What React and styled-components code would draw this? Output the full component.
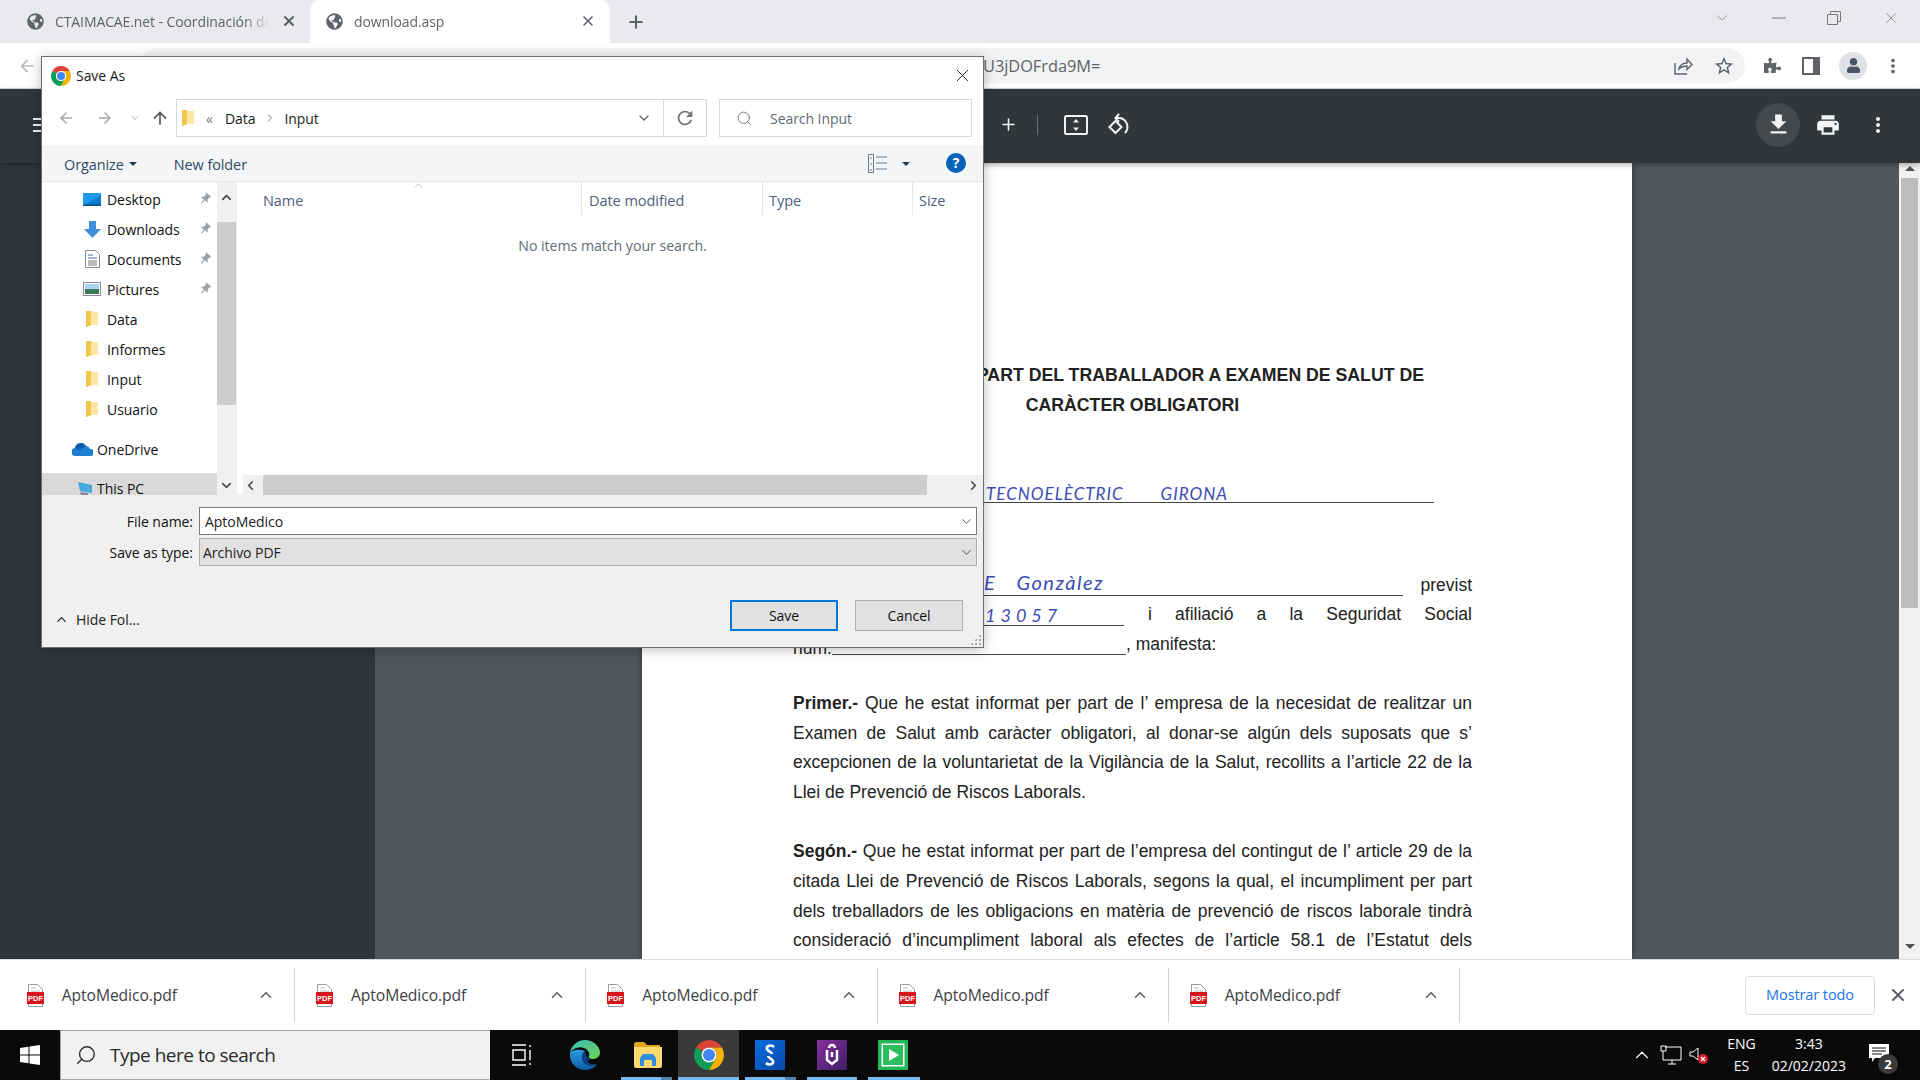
import React from "react";
import styled, { createGlobalStyle } from "styled-components";
import { FaGlobeAmericas, FaPuzzlePiece, FaUser } from "react-icons/fa";
import { FiChevronUp, FiChevronDown, FiChevronLeft, FiChevronRight, FiSearch, FiX, FiPlus } from "react-icons/fi";
import { MdMoreVert, MdFileDownload, MdPrint, MdArrowBack, MdArrowForward, MdArrowUpward, MdRefresh, MdPushPin, MdStarBorder } from "react-icons/md";

const UI = `"Open Sans", "Noto Sans", sans-serif`;
const DOC = `"Liberation Sans", Arial, sans-serif`;

const Global = createGlobalStyle`
  html, body { margin: 0; padding: 0; width: 1920px; height: 1080px; overflow: hidden; }
  * { box-sizing: border-box; }
  body { font-family: ${UI}; }
`;

const Screen = styled.div`
  position: relative;
  width: 1920px;
  height: 1080px;
  display: flex;
  flex-direction: column;
  overflow: hidden;
`;

/* browser chrome */
const TabStrip = styled.div`
  height: 43px;
  flex: none;
  background: #e8eaed;
  display: flex;
  align-items: center;
  padding-left: 20px;
  color: #5f6368;
`;
const Tab = styled.div`
  height: ${(p) => (p.$active ? "43px" : "auto")};
  width: ${(p) => (p.$active ? "300px" : "280px")};
  margin-left: ${(p) => (p.$active ? "10px" : "0")};
  background: ${(p) => (p.$active ? "#fff" : "transparent")};
  border-radius: 10px 10px 0 0;
  display: flex;
  align-items: center;
  padding: ${(p) => (p.$active ? "0 14px 1px 16px" : "0 3px 1px 7px")};
  font-size: 14px;
  gap: 11px;
`;
const TabTitle = styled.span`
  flex: 1;
  white-space: nowrap;
  overflow: hidden;
  letter-spacing: -0.1px;
  -webkit-mask-image: linear-gradient(90deg, #000 88%, transparent 100%);
`;
const NewTab = styled.div`
  margin-left: 16px;
  display: flex;
  color: #5f6368;
`;
const WindowControls = styled.div`
  margin-left: auto;
  display: flex;
  align-items: center;
  gap: 41px;
  padding: 0 20px 7px 0;
  color: #77797c;
`;
const Toolbar = styled.div`
  height: 46px;
  flex: none;
  background: #fff;
  border-bottom: 1px solid #dadce0;
  display: flex;
  align-items: flex-start;
  padding: 5px 0 0 17px;
  color: #5f6368;
`;
const BackIcon = styled.div`
  width: 123px;
  display: flex;
  height: 35px;
  align-items: center;
  color: #b9bbbe;
`;
const Omnibox = styled.div`
  width: 1605px;
  height: 35px;
  background: #f1f3f4;
  border-radius: 18px;
  display: flex;
  align-items: center;
  padding: 0 10px 0 843px;
  font-size: 16.4px;
  color: #5f6368;
  letter-spacing: -0.05px;
`;
const OmniActions = styled.div`
  margin-left: auto;
  display: flex;
  align-items: center;
  gap: 20px;
`;
const ToolbarActions = styled.div`
  display: flex;
  height: 35px;
  align-items: center;
  gap: 21px;
  padding-left: 19px;
`;
const Avatar = styled.div`
  width: 28px;
  height: 28px;
  margin-left: -2px;
  border-radius: 50%;
  background: #dfe1e5;
  display: flex;
  align-items: center;
  justify-content: center;
  color: #4a5568;
`;
const MenuDots = styled(MdMoreVert)`
  margin-left: -6px;
`;

/* pdf viewer */
const PdfBar = styled.div`
  height: 74px;
  flex: none;
  background: #323639;
  display: flex;
  align-items: center;
  color: #f1f3f4;
  padding: 0 0 3px 33px;
  position: relative;
  z-index: 1;
  box-shadow: 0 2px 5px rgba(0, 0, 0, 0.3);
`;
const Burger = styled.div`
  width: 18px;
  height: 14px;
  border-top: 2px solid #f1f3f4;
  border-bottom: 2px solid #f1f3f4;
  position: relative;
  &::after {
    content: "";
    position: absolute;
    left: 0;
    right: 0;
    top: 4px;
    height: 2px;
    background: #f1f3f4;
  }
`;
const ZoomTools = styled.div`
  margin-left: 948px;
  display: flex;
  align-items: center;
  gap: 19px;
`;
const BarDivider = styled.div`
  width: 1px;
  height: 20px;
  background: #6b6f72;
`;
const FitIcon = styled.svg`
  margin-left: 7px;
`;
const PdfActions = styled.div`
  margin-left: auto;
  display: flex;
  align-items: center;
  padding-right: 20px;
  gap: 14px;
`;
const RoundButton = styled.div`
  width: 44px;
  height: 44px;
  border-radius: 50%;
  background: ${(p) => (p.$on ? "#46494c" : "transparent")};
  display: flex;
  align-items: center;
  justify-content: center;
  margin-left: ${(p) => (p.$tight ? "-8px" : "0")};
`;
const Viewer = styled.div`
  flex: 1;
  min-height: 0;
  display: flex;
  background: #525659;
`;
const SidePanel = styled.div`
  width: 375px;
  background: #323639;
  flex: none;
`;
const PageArea = styled.div`
  flex: 1;
  display: flex;
  padding-left: 267px;
  overflow: hidden;
`;
const Page = styled.div`
  width: 990px;
  height: 796px;
  background: #fff;
  padding: 197px 160px 0 151px;
  font-family: ${DOC};
  color: #222;
  overflow: hidden;
  box-shadow: 0 0 6px rgba(0, 0, 0, 0.45);
`;
const DocTitle = styled.div`
  font-weight: 700;
  font-size: 17.7px;
  line-height: 30px;
  text-align: ${(p) => (p.$end ? "right" : "center")};
  padding-right: ${(p) => (p.$end ? "48px" : "0")};
  white-space: nowrap;
`;
const DocRow = styled.div`
  display: flex;
  align-items: flex-end;
  height: 29.5px;
  font-size: 17.5px;
  white-space: nowrap;
  margin-top: ${(p) => p.$top || 0}px;
  width: ${(p) => p.$width || "100%"};
`;
const Blank = styled.span`
  flex: ${(p) => (p.$w ? "none" : 1)};
  width: ${(p) => p.$w || 0}px;
  border-bottom: 1.5px solid #444;
  height: 24px;
  padding-left: ${(p) => p.$pad || 0}px;
  margin-bottom: 4px;
`;
const Handwriting = styled.span`
  display: inline-block;
  font-family: Lato, "Open Sans", sans-serif;
  font-style: italic;
  color: #3c4cb4;
  font-size: ${(p) => p.$size || 17}px;
  letter-spacing: ${(p) => p.$space || 0}px;
  word-spacing: ${(p) => p.$words || 0}px;
  transform: translateY(${(p) => p.$y || 0}px);
`;
const RowText = styled.span`
  flex: ${(p) => (p.$fill ? 1 : "none")};
  margin-left: ${(p) => p.$left || 0}px;
  text-align: justify;
  text-align-last: ${(p) => (p.$fill ? "justify" : "auto")};
  line-height: 29.5px;
`;
const Paragraph = styled.div`
  margin-top: ${(p) => p.$top}px;
  font-size: 17.5px;
  line-height: 29.6px;
`;
const Line = styled.div`
  text-align: justify;
  text-align-last: ${(p) => (p.$last ? "left" : "justify")};
  white-space: nowrap;
`;
const VScroll = styled.div`
  width: 21px;
  flex: none;
  background: #f1f1f1;
  display: flex;
  flex-direction: column;
  align-items: center;
  padding-top: 3px;
  color: #505050;
`;
const Triangle = styled.div`
  width: 0;
  height: 0;
  border-left: 5px solid transparent;
  border-right: 5px solid transparent;
  ${(p) => (p.$down ? "border-top: 5px solid #505050;" : "border-bottom: 5px solid #505050;")}
  margin: ${(p) => p.$m || "0"};
`;
const VThumb = styled.div`
  width: 17px;
  height: 430px;
  background: #bdbdbd;
  margin-top: 7px;
`;

/* download shelf */
const Shelf = styled.div`
  height: 71px;
  flex: none;
  background: #fff;
  border-top: 1px solid #dadce0;
  display: flex;
  align-items: center;
  padding-left: 3.75px;
  color: #3c4043;
`;
const DownloadItem = styled.div`
  width: 291.25px;
  height: 55px;
  border-right: 1px solid #d0d2d5;
  display: flex;
  align-items: center;
  padding: 0 19px 0 ${(p) => (p.$first ? 23 : 21)}px;
  font-size: 15.7px;
  gap: 18px;
`;
const ItemName = styled.span`
  flex: 1;
  letter-spacing: -0.1px;
`;
const ShowAll = styled.div`
  margin-left: auto;
  width: 130px;
  height: 39px;
  border: 1px solid #dadce0;
  border-radius: 4px;
  color: #1a73e8;
  display: flex;
  align-items: center;
  justify-content: center;
  font-size: 14.5px;
  font-weight: 500;
  letter-spacing: -0.1px;
  padding-bottom: 2px;
`;
const ShelfClose = styled.div`
  width: 45px;
  display: flex;
  justify-content: center;
  color: #5f6368;
`;

/* taskbar */
const Taskbar = styled.div`
  height: 50px;
  flex: none;
  background: #0a0a0b;
  display: flex;
  align-items: stretch;
  color: #fff;
`;
const StartButton = styled.div`
  width: 60px;
  display: flex;
  align-items: center;
  justify-content: center;
`;
const SearchBox = styled.div`
  width: 430px;
  background: #f1f1f1;
  border: 1px solid #a8a8a8;
  border-right: 0;
  display: flex;
  align-items: center;
  padding-left: 14px;
  gap: 13px;
  font-size: 19px;
  color: #2b2b2b;
  letter-spacing: -0.5px;
`;
const SearchGlass = styled(FiSearch)`
  transform: scaleX(-1);
`;
const TaskCell = styled.div`
  position: relative;
  width: ${(p) => p.$w}px;
  display: flex;
  align-items: center;
  justify-content: center;
  background: ${(p) => (p.$active ? "#3a3a3a" : "transparent")};
  &::after {
    content: "";
    display: ${(p) => (p.$run ? "block" : "none")};
    position: absolute;
    left: ${(p) => (p.$run ? p.$run[0] : 0)}px;
    right: ${(p) => (p.$run ? p.$run[1] : 0)}px;
    bottom: 0;
    height: 3px;
    background: ${(p) => (p.$split ? "linear-gradient(90deg, #76b9ed 78%, #4f85ad 78%)" : "#76b9ed")};
  }
`;
const Tray = styled.div`
  margin-left: auto;
  display: flex;
  align-items: center;
  padding-right: 31px;
`;
const TrayIcons = styled.div`
  display: flex;
  align-items: center;
  gap: 7px;
  margin-right: 18px;
`;
const TrayText = styled.div`
  display: flex;
  flex-direction: column;
  align-items: center;
  gap: 4px;
  font-size: 14px;
  line-height: 18px;
  margin-right: ${(p) => p.$right}px;
`;
const Notify = styled.div`
  position: relative;
  width: 20px;
  height: 18px;
  margin-top: -4px;
`;
const NotifyBadge = styled.span`
  position: absolute;
  right: -9px;
  bottom: -12px;
  width: 20px;
  height: 20px;
  border-radius: 50%;
  background: #3a3a3a;
  font-size: 13px;
  font-weight: 700;
  line-height: 20px;
  text-align: center;
`;

/* save as dialog */
const Dialog = styled.div`
  position: absolute;
  left: 41px;
  top: 56px;
  width: 943px;
  height: 592px;
  background: #fff;
  border: 1px solid #6e6e6e;
  display: flex;
  flex-direction: column;
  box-shadow: 0 2px 12px rgba(0, 0, 0, 0.25);
  font-size: 14px;
  color: #1a1a1a;
  z-index: 5;
  letter-spacing: -0.05px;
`;
const TitleBar = styled.div`
  height: 42px;
  flex: none;
  display: flex;
  align-items: center;
  padding: 0 10px 5px 9px;
  gap: 5px;
`;
const CloseX = styled.div`
  margin-left: auto;
  display: flex;
`;
const NavBar = styled.div`
  height: 46px;
  flex: none;
  display: flex;
  align-items: flex-start;
  padding-left: 15px;
  color: #a8a8a8;
`;
const NavButtons = styled.div`
  width: 119px;
  height: 38px;
  display: flex;
  align-items: center;
  gap: 21px;
`;
const SmallChevron = styled(FiChevronDown)`
  margin-left: -6px;
`;
const UpArrow = styled(MdArrowUpward)`
  margin-left: -12px;
`;
const AddressBox = styled.div`
  width: 531px;
  height: 38px;
  border: 1px solid #d9d9d9;
  display: flex;
  align-items: center;
  color: #1a1a1a;
  padding-left: 4px;
`;
const Crumb = styled.span`
  margin-left: ${(p) => (p.$auto ? "auto" : `${p.$left || 0}px`)};
  margin-right: ${(p) => (p.$auto ? "11px" : "0")};
  color: ${(p) => p.$color || "inherit"};
  display: flex;
`;
const AddressEnd = styled.div`
  height: 100%;
  width: 43px;
  border-left: 1px solid #d9d9d9;
  display: flex;
  align-items: center;
  justify-content: center;
  color: #777;
`;
const SearchField = styled.div`
  margin-left: 12px;
  width: 253px;
  height: 38px;
  border: 1px solid #d9d9d9;
  display: flex;
  align-items: center;
  padding-left: 16px;
  gap: 17px;
  color: #5f6b76;
`;
const CommandBar = styled.div`
  height: 37px;
  flex: none;
  background: #f4f5f7;
  border-bottom: 1px solid #e6e6e6;
  display: flex;
  align-items: center;
  padding: 2px 17px 0 22px;
  color: #2f4a66;
  font-size: 14.4px;
`;
const DropCaret = styled.span`
  display: inline-block;
  width: 0;
  height: 0;
  border-left: 4px solid transparent;
  border-right: 4px solid transparent;
  border-top: 4px solid #1f3a5c;
  margin-left: ${(p) => p.$left}px;
`;
const NewFolder = styled.span`
  margin-left: 37px;
`;
const CommandRight = styled.div`
  margin-left: auto;
  display: flex;
  align-items: center;
`;
const HelpDot = styled.div`
  width: 20px;
  height: 20px;
  border-radius: 50%;
  background: #0a62b8;
  color: #fff;
  font-size: 14px;
  font-weight: 700;
  line-height: 20px;
  text-align: center;
  margin: -2px 0 0 36px;
`;
const Browser = styled.div`
  height: 313px;
  flex: none;
  display: flex;
`;
const NavPane = styled.div`
  width: 175px;
  flex: none;
  padding-top: 2px;
  overflow: hidden;
`;
const TreeRow = styled.div`
  height: 30px;
  display: flex;
  align-items: center;
  padding-left: ${(p) => p.$indent}px;
  margin-top: ${(p) => p.$top || 0}px;
  background: ${(p) => (p.$selected ? "#d9d9d9" : "transparent")};
  color: #111;
  position: relative;
`;
const TreeIcon = styled.span`
  width: ${(p) => p.$w}px;
  display: flex;
  justify-content: center;
  flex: none;
  margin-right: ${(p) => p.$gap}px;
`;
const Pin = styled.span`
  margin-left: auto;
  margin-right: 5px;
  display: flex;
  color: #9aa2a8;
`;
const PinIcon = styled(MdPushPin)`
  transform: rotate(40deg);
`;
const PaneScroll = styled.div`
  width: 19px;
  flex: none;
  background: #f0f0f0;
  display: flex;
  flex-direction: column;
  align-items: center;
  color: #444;
  padding-top: 8px;
`;
const PaneThumb = styled.div`
  width: 19px;
  height: 183px;
  background: #cdcdcd;
  margin-top: 17px;
`;
const PaneDown = styled.div`
  margin-top: 73px;
  display: flex;
`;
const Files = styled.div`
  flex: 1;
  display: flex;
  flex-direction: column;
  border-left: 1px solid #f0f0f0;
`;
const HeaderRow = styled.div`
  height: 33px;
  display: flex;
  flex: none;
  color: #4c607a;
  font-size: 14.5px;
`;
const HeaderCell = styled.div`
  position: relative;
  width: ${(p) => p.$w}px;
  padding: 3px 0 0 ${(p) => p.$pad}px;
  display: flex;
  align-items: center;
  border-right: ${(p) => (p.$end ? "0" : "1px solid #e5e5e5")};
`;
const SortCaret = styled.span`
  position: absolute;
  left: 175px;
  top: -3px;
  display: flex;
  color: #8a8a8a;
`;
const EmptyNote = styled.div`
  flex: 1;
  text-align: center;
  padding: 21px 0 0 5px;
  font-size: 14.2px;
  color: #5f6b76;
`;
const HScroll = styled.div`
  height: 20px;
  flex: none;
  background: #f0f0f0;
  display: flex;
  align-items: center;
  margin-left: 6px;
  color: #444;
`;
const HThumb = styled.div`
  width: 664px;
  height: 20px;
  background: #cdcdcd;
`;
const ArrowCell = styled.div`
  width: ${(p) => p.$w}px;
  display: flex;
  justify-content: ${(p) => (p.$end ? "center" : "flex-start")};
  margin-left: ${(p) => (p.$end ? "auto" : "0")};
`;
const Footer = styled.div`
  flex: 1;
  background: #f0f0f0;
  padding-top: 12px;
  position: relative;
  display: flex;
  flex-direction: column;
`;
const FieldRow = styled.div`
  display: grid;
  grid-template-columns: 151px 778px;
  column-gap: 6px;
  align-items: center;
  margin-bottom: 3px;
`;
const FieldLabel = styled.label`
  text-align: right;
  color: #111;
`;
const FieldBox = styled.div`
  height: 28px;
  border: 1px solid ${(p) => (p.$gray ? "#adadad" : "#7a7a7a")};
  background: ${(p) => (p.$gray ? "#e1e1e1" : "#fff")};
  display: flex;
  align-items: center;
  padding: 0 2px 0 ${(p) => (p.$gray ? 3 : 5)}px;
  justify-content: space-between;
  color: #222;
`;
const ButtonRow = styled.div`
  margin-top: 31px;
  display: flex;
  align-items: center;
  padding: 0 20px 0 12px;
`;
const HideFolders = styled.div`
  display: flex;
  align-items: center;
  gap: 7px;
  margin-top: 8px;
  color: #222;
`;
const DialogButton = styled.div`
  width: 108px;
  height: 31px;
  border: ${(p) => (p.$primary ? "2px solid #0078d7" : "1px solid #adadad")};
  background: #e1e1e1;
  display: flex;
  align-items: center;
  justify-content: center;
  color: #111;
  margin-left: ${(p) => p.$left || "17px"};
`;
const Grip = styled.div`
  position: absolute;
  right: 2px;
  bottom: 2px;
  width: 11px;
  height: 11px;
  background-image: radial-gradient(circle, #a8a8a8 1.1px, transparent 1.2px);
  background-size: 4px 4px;
  clip-path: polygon(100% 0, 100% 100%, 0 100%);
`;

const ChromeLogo = ({ size }) => (
  <svg width={size} height={size} viewBox="4 4 40 40">
    <path fill="#db4437" d="M6.68 14A20 20 0 0 1 41.32 14H24A10 10 0 0 0 15.34 19z" />
    <path fill="#0f9d58" d="M6.68 14L15.34 19A10 10 0 0 0 32.66 29L24 44A20 20 0 0 1 6.68 14z" />
    <path fill="#f4b400" d="M24 14H41.32A20 20 0 0 1 24 44L32.66 29A10 10 0 0 0 24 14z" />
    <circle cx="24" cy="24" r="10" fill="#fff" />
    <circle cx="24" cy="24" r="8" fill="#4285f4" />
  </svg>
);
const Folder = () => (
  <svg width="14" height="18" viewBox="0 0 14 18">
    <path fill="#f7d774" d="M1 1h5l1 1v13l-6 2z" />
    <path fill="#fbe6a2" d="M6 2h7v13H3z" />
    <path fill="#f0c64e" d="M1 1v16l5-2V1z" />
  </svg>
);
const PdfIcon = () => (
  <svg width="17" height="23" viewBox="0 0 17 23">
    <path fill="#fff" stroke="#9a9a9a" d="M1.5.5h9l5 5v17h-14z" />
    <path stroke="#bbb" d="M4 4h5M4 7h9" />
    <rect x="0" y="8" width="17" height="12" fill="#d8131b" />
    <text x="8.5" y="17" fontSize="7.5" fontWeight="700" fill="#fff" textAnchor="middle" fontFamily={DOC}>
      PDF
    </text>
  </svg>
);
const WindowsLogo = () => (
  <svg width="20" height="20" viewBox="0 0 20 20" fill="#fff">
    <path d="M0 3l8.500-1.200V9.500H0zM9.500 1.600L20 0v9.500H9.500zM0 10.500h8.500v7.700L0 17zM9.500 10.500H20V20l-10.500-1.600z" />
  </svg>
);
const EdgeLogo = () => (
  <svg width="30" height="30" viewBox="0 0 30 30">
    <defs>
      <linearGradient id="edgeA" x1="0" y1="0" x2="1" y2="1">
        <stop offset="0" stopColor="#35c1c0" />
        <stop offset="1" stopColor="#6fd24c" />
      </linearGradient>
      <linearGradient id="edgeB" x1="0" y1="0" x2="0" y2="1">
        <stop offset="0" stopColor="#2a9be0" />
        <stop offset="1" stopColor="#0b5ea8" />
      </linearGradient>
    </defs>
    <path fill="url(#edgeA)" d="M15 0C7 0 1 6 0 13c3-5 9-7 14-5 5 2 6 6 5 8-1 2 1 3 4 3 4 0 7-3 7-6C30 6 23 0 15 0z" />
    <path fill="url(#edgeB)" d="M0 13c-1 9 6 17 15 17 5 0 9-2 12-6-3 2-9 2-12-1-3-3-4-8 0-12-6-2-12-2-15 2z" />
    <path fill="#0a3f86" d="M15 11c-4 3-4 8-1 12 3 3 9 4 13 1-3 1-8 0-9-2-1-2 2-2 3-3-3 0-6-4-6-8z" />
  </svg>
);
const ExplorerLogo = () => (
  <svg width="28" height="26" viewBox="0 0 28 26">
    <path fill="#e2a61e" d="M0 2c0-1 1-2 2-2h8l3 3h13v6H0z" />
    <path fill="#fbd96b" d="M0 5h28v19c0 1-1 2-2 2H2c-1 0-2-1-2-2z" />
    <path fill="#2f8fdc" d="M6 16l3-4h10l3 4v8h-4v-6h-8v6H6z" />
  </svg>
);
const AppSquare = ({ from, to, children }) => (
  <svg width="30" height="30" viewBox="0 0 30 30">
    <defs>
      <linearGradient id={from.slice(1)} x1="0" y1="0" x2="1" y2="1">
        <stop offset="0" stopColor={from} />
        <stop offset="1" stopColor={to} />
      </linearGradient>
    </defs>
    <rect width="30" height="30" fill={`url(#${from.slice(1)})`} />
    {children}
  </svg>
);

const Tree = [
  { label: "Desktop", pin: true, icon: <svg width="18" height="13" viewBox="0 0 18 13"><rect width="18" height="13" fill="#1e9be8" /><path d="M0 13L18 2v11z" fill="#0d7cd0" /><rect y="11.500" width="18" height="1.500" fill="#0a4f88" /></svg> },
  { label: "Downloads", pin: true, icon: <svg width="17" height="17" viewBox="0 0 17 17"><path fill="#3f8fdb" d="M5 0h7v8h5l-8.500 9L0 8h5z" /></svg> },
  { label: "Documents", pin: true, icon: <svg width="15" height="18" viewBox="0 0 15 18"><path fill="#fff" stroke="#8a8a8a" d="M.5.5h10l4 4v13H.5z" /><path stroke="#3f6fa8" d="M3 5h5M3 8h9" /><path stroke="#777" d="M3 11h9M3 13h9M3 15h9" /></svg> },
  { label: "Pictures", pin: true, icon: <svg width="18" height="14" viewBox="0 0 18 14"><rect x=".5" y=".5" width="17" height="13" fill="#fff" stroke="#8a8a8a" /><rect x="2" y="2" width="14" height="5" fill="#a9d3ee" /><rect x="2" y="7" width="14" height="5" fill="#3d7a5a" /></svg> },
  { label: "Data", icon: <Folder /> },
  { label: "Informes", icon: <Folder /> },
  { label: "Input", icon: <Folder /> },
  { label: "Usuario", icon: <Folder /> },
];

const Downloads = [0, 1, 2, 3, 4];

const App = () => {
  return (
    <Screen>
      <Global />
      <TabStrip>
        <Tab>
          <FaGlobeAmericas size={17} />
          <TabTitle>CTAIMACAE.net - Coordinación de Actividades</TabTitle>
          <FiX size={16} strokeWidth={3} />
        </Tab>
        <Tab $active>
          <FaGlobeAmericas size={17} />
          <TabTitle>download.asp</TabTitle>
          <FiX size={16} strokeWidth={2.5} />
        </Tab>
        <NewTab>
          <FiPlus size={20} strokeWidth={2.5} />
        </NewTab>
        <WindowControls>
          <FiChevronDown size={18} strokeWidth={1} />
          <svg width="14" height="2" viewBox="0 0 14 2"><path d="M0 1h14" stroke="currentColor" /></svg>
          <svg width="14" height="14" viewBox="0 0 14 14" fill="none" stroke="currentColor"><path d="M.5 3.500h10v10H.5zM3.500 3V.5h10v10H11" /></svg>
          <FiX size={18} strokeWidth={1} />
        </WindowControls>
      </TabStrip>
      <Toolbar>
        <BackIcon>
          <MdArrowBack size={20} />
        </BackIcon>
        <Omnibox>
          U3jDOFrda9M=
          <OmniActions>
            <svg width="20" height="20" viewBox="0 0 20 20" fill="none" stroke="#5f6368" strokeWidth="1.400"><path d="M2 7v11h12M6 13c1-4 4-6 8-6V3l5 5.500-5 5V10c-3 0-6 1-8 3z" /></svg>
            <MdStarBorder size={22} />
          </OmniActions>
        </Omnibox>
        <ToolbarActions>
          <FaPuzzlePiece size={17} />
          <svg width="18" height="18" viewBox="0 0 18 18"><rect width="18" height="18" fill="#5f6368" /><rect x="2" y="2" width="9" height="14" fill="#fff" /></svg>
          <Avatar>
            <FaUser size={15} />
          </Avatar>
          <MenuDots size={22} />
        </ToolbarActions>
      </Toolbar>
      <PdfBar>
        <Burger />
        <ZoomTools>
          <FiPlus size={19} strokeWidth={2} />
          <BarDivider />
          <FitIcon width="24" height="20" viewBox="0 0 24 20"><rect x="1" y="1" width="22" height="18" rx="1.500" fill="none" stroke="#f1f3f4" strokeWidth="2" /><path fill="#f1f3f4" d="M12 4l3 3.500H9zM12 16l-3-3.500h6z" /></FitIcon>
          <svg width="24" height="24" viewBox="0 0 24 24" fill="none" stroke="#f1f3f4" strokeWidth="2"><path d="M2.500 14l6-6 6 6-6 6z" /><path d="M9 5h4a9 9 0 0 1 5 15" /><path d="M12 1L8.500 5 12 9" /></svg>
        </ZoomTools>
        <PdfActions>
          <RoundButton $on>
            <MdFileDownload size={27} />
          </RoundButton>
          <RoundButton $tight>
            <MdPrint size={26} />
          </RoundButton>
          <RoundButton $tight>
            <MdMoreVert size={24} />
          </RoundButton>
        </PdfActions>
      </PdfBar>
      <Viewer>
        <SidePanel />
        <PageArea>
          <Page>
            <DocTitle $end>PART DEL TRABALLADOR A EXAMEN DE SALUT DE</DocTitle>
            <DocTitle>CARÀCTER OBLIGATORI</DocTitle>
            <DocRow $top={57} $width="641px">
              <Blank $pad={193}>
                <Handwriting $space={1} $words={32} $y={4}>TECNOELÈCTRIC GIRONA</Handwriting>
              </Blank>
            </DocRow>
            <DocRow $top={64}>
              <Blank $pad={191}>
                <Handwriting $size={20} $space={1.5} $words={14} $y={-2}>E Gonzàlez</Handwriting>
              </Blank>
              <RowText $left={17}>previst</RowText>
            </DocRow>
            <DocRow>
              <Blank $w={331} $pad={192}>
                <Handwriting $size={18} $space={5} $y={2}>13057</Handwriting>
              </Blank>
              <RowText $fill $left={24}>i afiliació a la Seguridat Social</RowText>
            </DocRow>
            <DocRow>
              num.
              <Blank $w={294} />
              <RowText>, manifesta:</RowText>
            </DocRow>
            <Paragraph $top={30}>
              <Line><b>Primer.-</b> Que he estat informat per part de l’ empresa de la necesidat de realitzar un</Line>
              <Line>Examen de Salut amb caràcter obligatori, al donar-se algún dels suposats que s’</Line>
              <Line>excepcionen de la voluntarietat de la Vigilància de la Salut, recollits a l’article 22 de la</Line>
              <Line $last>Llei de Prevenció de Riscos Laborals.</Line>
            </Paragraph>
            <Paragraph $top={30}>
              <Line><b>Segón.-</b> Que he estat informat per part de l’empresa del contingut de l’ article 29 de la</Line>
              <Line>citada Llei de Prevenció de Riscos Laborals, segons la qual, el incumpliment per part</Line>
              <Line>dels treballadors de les obligacions en matèria de prevenció de riscos laborale tindrà</Line>
              <Line>consideració d’incumpliment laboral als efectes de l’article 58.1 de l’Estatut dels</Line>
            </Paragraph>
          </Page>
        </PageArea>
        <VScroll>
          <Triangle />
          <VThumb />
          <Triangle $down $m="336px 0 0 0" />
        </VScroll>
      </Viewer>
      <Shelf>
        {Downloads.map((i) => (
          <DownloadItem key={i} $first={i === 0}>
            <PdfIcon />
            <ItemName>AptoMedico.pdf</ItemName>
            <FiChevronUp size={18} strokeWidth={2.2} color="#5f6368" />
          </DownloadItem>
        ))}
        <ShowAll>Mostrar todo</ShowAll>
        <ShelfClose>
          <FiX size={20} strokeWidth={2.5} />
        </ShelfClose>
      </Shelf>
      <Taskbar>
        <StartButton>
          <WindowsLogo />
        </StartButton>
        <SearchBox>
          <SearchGlass size={22} strokeWidth={1.5} />
          Type here to search
        </SearchBox>
        <TaskCell $w={63}>
          <svg width="20" height="22" viewBox="0 0 20 22" fill="none" stroke="#fff" strokeWidth="1.400"><path d="M0 1h14M0 21h14M1 6h12v10H1zM18 1v2M18 6v10M18 19v2" /></svg>
        </TaskCell>
        <TaskCell $w={64}>
          <EdgeLogo />
        </TaskCell>
        <TaskCell $w={61} $run={[4, 6]} $split>
          <ExplorerLogo />
        </TaskCell>
        <TaskCell $w={61} $active $run={[0, 0]}>
          <ChromeLogo size={30} />
        </TaskCell>
        <TaskCell $w={62} $run={[6, 5]} $split>
          <AppSquare from="#0a6fe0" to="#0a47a8">
            <path d="M19 7c-3-3-8-1-7 2 1 3 5 3 5 5M11 23c3 3 8 1 7-2-1-3-5-3-5-5" fill="none" stroke="#fff" strokeWidth="2.500" />
          </AppSquare>
        </TaskCell>
        <TaskCell $w={61} $run={[6, 5]}>
          <AppSquare from="#8a2f9e" to="#3b1f66">
            <path d="M10 10v10l5 4 5-4V10M12 8a3 3 0 0 1 6 0M15 12v5" fill="none" stroke="#fff" strokeWidth="2.500" />
          </AppSquare>
        </TaskCell>
        <TaskCell $w={61} $run={[6, 3]}>
          <AppSquare from="#25b75a" to="#25b75a">
            <rect x="3.500" y="3.500" width="23" height="23" fill="#fff" />
            <rect x="5" y="5" width="20" height="20" fill="#2bbd5e" />
            <path d="M11 9l10 6-10 6z" fill="#fff" />
          </AppSquare>
        </TaskCell>
        <Tray>
          <TrayIcons>
            <FiChevronUp size={22} strokeWidth={1.2} />
            <svg width="22" height="20" viewBox="0 0 22 20" fill="none" stroke="#fff"><path d="M5 2h16v13H3M1 1h5v5H1zM3 6v9M12 15v4M8 19h8" /></svg>
            <svg width="20" height="18" viewBox="0 0 20 18"><path d="M1 6h3l5-4v12l-5-4H1z" fill="none" stroke="#fff" /><circle cx="14" cy="13" r="5" fill="#d81f2a" /><path d="M12 11l4 4M16 11l-4 4" stroke="#fff" strokeWidth="1.200" /></svg>
          </TrayIcons>
          <TrayText $right={16}>
            <span>ENG</span>
            <span>ES</span>
          </TrayText>
          <TrayText $right={23}>
            <span>3:43</span>
            <span>02/02/2023</span>
          </TrayText>
          <Notify>
            <svg width="20" height="18" viewBox="0 0 20 18"><path fill="#fff" d="M0 0h20v14H6l-3 4v-4H0z" /><path d="M3 4h14M3 7h14M3 10h10" stroke="#111" /></svg>
            <NotifyBadge>2</NotifyBadge>
          </Notify>
        </Tray>
      </Taskbar>

      <Dialog>
        <TitleBar>
          <ChromeLogo size={20} />
          Save As
          <CloseX>
            <FiX size={21} strokeWidth={1} color="#111" />
          </CloseX>
        </TitleBar>
        <NavBar>
          <NavButtons>
            <MdArrowBack size={18} />
            <MdArrowForward size={18} />
            <SmallChevron size={12} />
            <UpArrow size={20} color="#555" />
          </NavButtons>
          <AddressBox>
            <Folder />
            <Crumb $left={11} $color="#777">«</Crumb>
            <Crumb $left={12}>Data</Crumb>
            <Crumb $left={9} $color="#777"><FiChevronRight size={12} /></Crumb>
            <Crumb $left={8}>Input</Crumb>
            <Crumb $auto $color="#666">
              <FiChevronDown size={16} />
            </Crumb>
            <AddressEnd>
              <MdRefresh size={22} />
            </AddressEnd>
          </AddressBox>
          <SearchField>
            <FiSearch size={17} strokeWidth={1.2} />
            Search Input
          </SearchField>
        </NavBar>
        <CommandBar>
          Organize
          <DropCaret $left={5} />
          <NewFolder>New folder</NewFolder>
          <CommandRight>
            <svg width="19" height="20" viewBox="0 0 19 20" fill="none" stroke="#6b7b8c"><path d="M.5.5h5v18h-5zM8 3h11M8 9h11M8 15h11M2 4h2M2 10h2M2 16h2" /></svg>
            <DropCaret $left={15} />
            <HelpDot>?</HelpDot>
          </CommandRight>
        </CommandBar>
        <Browser>
          <NavPane>
            {Tree.map((item) => (
              <TreeRow key={item.label} $indent={41}>
                <TreeIcon $w={18} $gap={6}>{item.icon}</TreeIcon>
                {item.label}
                {item.pin && (
                  <Pin>
                    <PinIcon size={14} />
                  </Pin>
                )}
              </TreeRow>
            ))}
            <TreeRow $indent={30} $top={10}>
              <TreeIcon $w={21} $gap={4}>
                <svg width="21" height="13" viewBox="0 0 21 13"><path fill="#1f7fd0" d="M4 13a4 4 0 0 1-1-8 6 6 0 0 1 11-2 4.500 4.500 0 0 1 4 3 3.500 3.500 0 0 1 1 7z" /><path fill="#0a5ca8" d="M3 5a6 6 0 0 1 11-2L7 7z" /></svg>
              </TreeIcon>
              OneDrive
            </TreeRow>
            <TreeRow $indent={36} $top={9} $selected>
              <TreeIcon $w={15} $gap={4}>
                <svg width="15" height="15" viewBox="0 0 15 15"><path fill="#4aa8e0" d="M0 1l14 3v8L2 10z" /><path fill="#7f8c99" d="M2 11l8 1v2H3z" /></svg>
              </TreeIcon>
              This PC
            </TreeRow>
          </NavPane>
          <PaneScroll>
            <FiChevronUp size={15} strokeWidth={2.5} />
            <PaneThumb />
            <PaneDown>
              <FiChevronDown size={15} strokeWidth={2.5} />
            </PaneDown>
          </PaneScroll>
          <Files>
            <HeaderRow>
              <HeaderCell $w={345} $pad={26}>
                Name
                <SortCaret>
                  <FiChevronUp size={13} strokeWidth={1} />
                </SortCaret>
              </HeaderCell>
              <HeaderCell $w={181} $pad={7}>Date modified</HeaderCell>
              <HeaderCell $w={150} $pad={6}>Type</HeaderCell>
              <HeaderCell $w={70} $pad={6} $end>Size</HeaderCell>
            </HeaderRow>
            <EmptyNote>No items match your search.</EmptyNote>
            <HScroll>
              <ArrowCell $w={20}>
                <FiChevronLeft size={15} strokeWidth={2.5} />
              </ArrowCell>
              <HThumb />
              <ArrowCell $w={20} $end>
                <FiChevronRight size={15} strokeWidth={2.5} />
              </ArrowCell>
            </HScroll>
          </Files>
        </Browser>
        <Footer>
          <FieldRow>
            <FieldLabel>File name:</FieldLabel>
            <FieldBox>
              AptoMedico
              <FiChevronDown size={15} strokeWidth={1.2} />
            </FieldBox>
          </FieldRow>
          <FieldRow>
            <FieldLabel>Save as type:</FieldLabel>
            <FieldBox $gray>
              Archivo PDF
              <FiChevronDown size={15} strokeWidth={1.2} />
            </FieldBox>
          </FieldRow>
          <ButtonRow>
            <HideFolders>
              <FiChevronUp size={15} strokeWidth={2} />
              Hide Fol...
            </HideFolders>
            <DialogButton $primary $left="auto">Save</DialogButton>
            <DialogButton>Cancel</DialogButton>
          </ButtonRow>
          <Grip />
        </Footer>
      </Dialog>
    </Screen>
  );
};

export default App;
